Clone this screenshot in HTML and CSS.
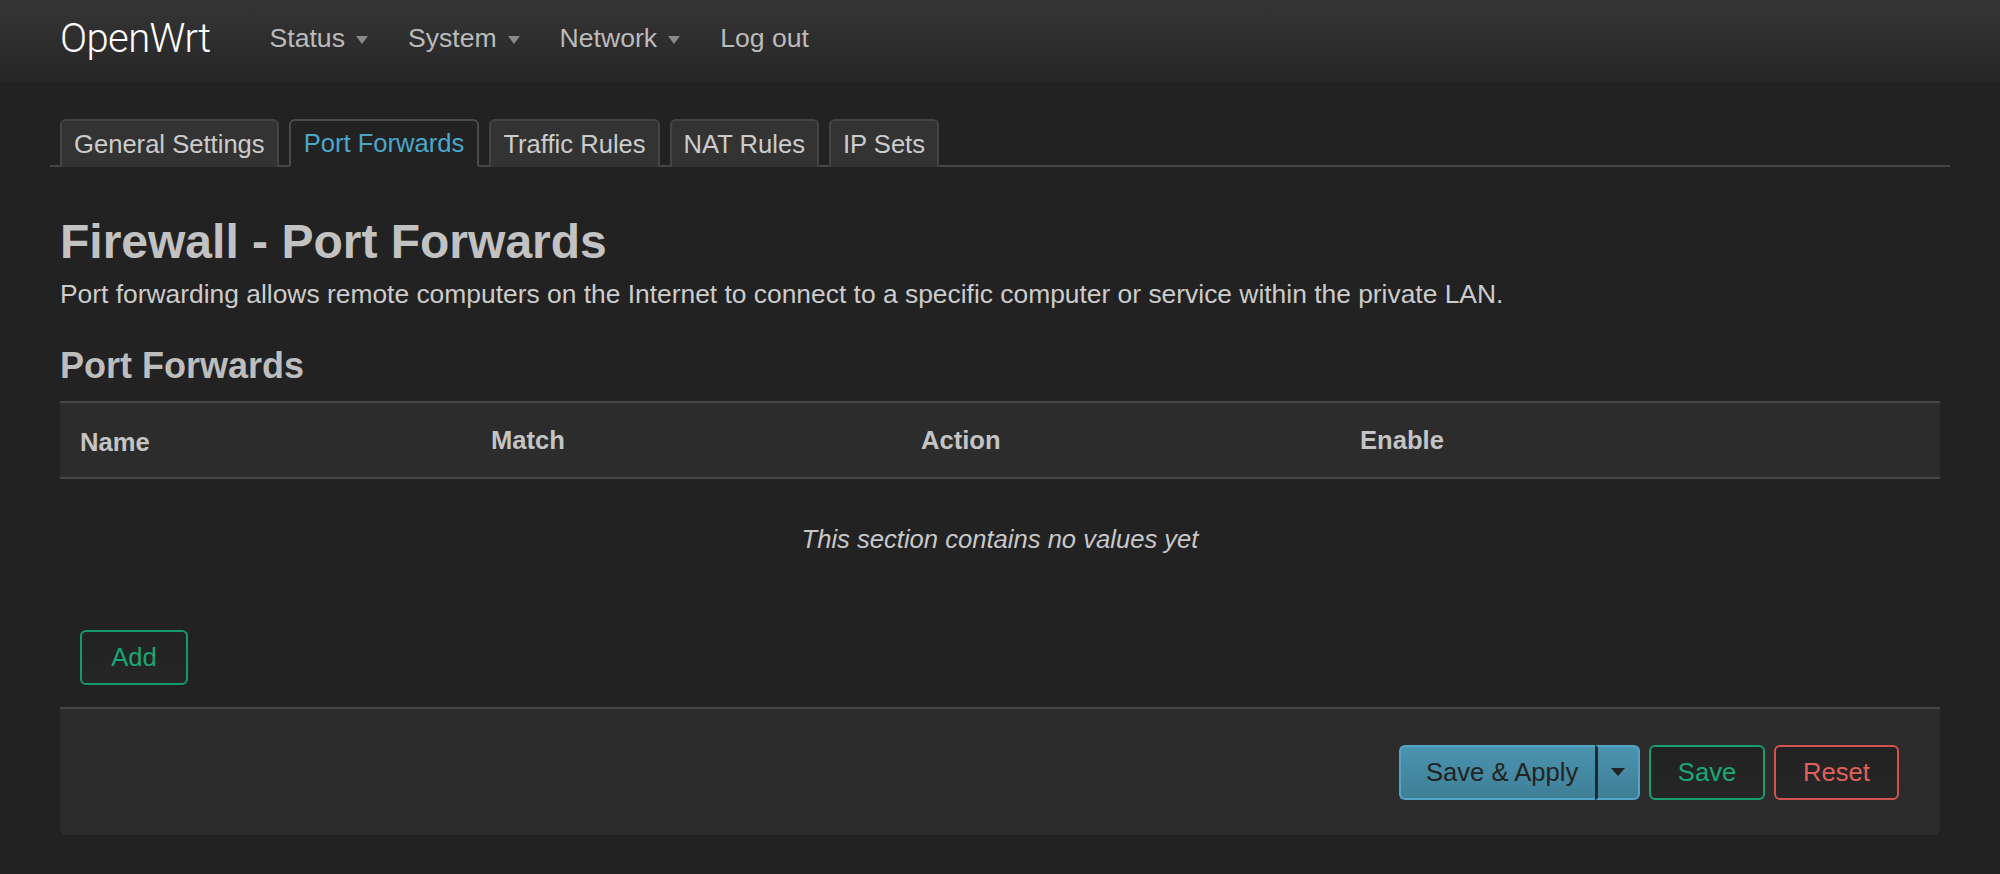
FILE: index.html
```html
<!DOCTYPE html>
<html lang="en">
<head>
<meta charset="utf-8">
<title>OpenWrt - Firewall - Port Forwards</title>
<link rel="stylesheet" href="styles.css">
</head>
<body>
<header class="topbar">
  <a class="brand" href="#">OpenWrt</a>
  <nav class="menu">
    <a class="menu-item" href="#">Status<span class="caret"></span></a>
    <a class="menu-item" href="#">System<span class="caret"></span></a>
    <a class="menu-item" href="#">Network<span class="caret"></span></a>
    <a class="menu-item" href="#">Log out</a>
  </nav>
</header>
<main class="container">
  <ul class="tabs">
    <li class="tab">General Settings</li>
    <li class="tab active">Port Forwards</li>
    <li class="tab">Traffic Rules</li>
    <li class="tab">NAT Rules</li>
    <li class="tab">IP Sets</li>
  </ul>
  <h2 class="page-title">Firewall - Port Forwards</h2>
  <p class="page-desc">Port forwarding allows remote computers on the Internet to connect to a specific computer or service within the private LAN.</p>
  <section class="cbi-section">
    <h3 class="section-title">Port Forwards</h3>
    <div class="table">
      <div class="table-head">
        <div class="th th-name">Name</div>
        <div class="th th-match">Match</div>
        <div class="th th-action">Action</div>
        <div class="th th-enable">Enable</div>
      </div>
      <div class="placeholder"><em>This section contains no values yet</em></div>
    </div>
    <div class="section-create">
      <button class="btn btn-add" type="button">Add</button>
    </div>
  </section>
  <div class="page-actions">
    <div class="btn-group">
      <button class="btn btn-apply" type="button">Save &amp; Apply</button>
      <button class="btn btn-apply-toggle" type="button"><span class="caret-dark"></span></button>
    </div>
    <button class="btn btn-save" type="button">Save</button>
    <button class="btn btn-reset" type="button">Reset</button>
  </div>
</main>
</body>
</html>
```
FILE: styles.css
```css
* { box-sizing: border-box; }
html, body { margin: 0; padding: 0; }
body {
  background: #222;
  color: #ccc;
  font-family: "Liberation Sans", Arial, sans-serif;
  font-size: 25.6px;
  line-height: 1.5;
}
a { text-decoration: none; }

.topbar {
  height: 83px;
  display: flex;
  align-items: center;
  padding: 0 0 6px 60px;
  background: linear-gradient(#353535, #262626);
}
.brand {
  font-family: "Roboto", "Liberation Sans", sans-serif;
  font-weight: 300;
  font-size: 40px;
  color: #fff;
  margin-right: 39px;
  letter-spacing: -0.6px;
}
.menu { display: flex; }
.menu-item {
  display: flex;
  align-items: center;
  color: #bbb;
  font-size: 26.6px;
  padding: 0 20px;
}
.caret {
  width: 0;
  height: 0;
  margin-left: 11px;
  margin-top: 3px;
  border-left: 6px solid transparent;
  border-right: 6px solid transparent;
  border-top: 8px solid #8a8a8a;
}

.container { padding: 0 60px; }

.tabs {
  list-style: none;
  display: flex;
  gap: 10px;
  margin: 36px -10px 0;
  padding: 0 0 0 10px;
  border-bottom: 2px solid #464646;
}
.tab {
  height: 48px;
  margin-bottom: -2px;
  padding: 0 12px;
  display: flex;
  align-items: center;
  background: #333;
  color: #ccc;
  border: 2px solid #444;
  border-bottom: none;
  border-radius: 6px 6px 0 0;
}
.tab.active {
  padding: 0 13px;
  background: #222;
  color: #4ba7cb;
  border-color: #4a4a4a;
  border-bottom: 2px solid #222;
}

.page-title {
  margin: 46px 0 0;
  font-size: 48px;
  line-height: 1.2;
  font-weight: bold;
  color: #c2c2c2;
}
.page-desc {
  margin: 4px 0 0;
  font-size: 26.4px;
  line-height: 1.5;
  color: #ccc;
}
.section-title {
  margin: 30px 0 0;
  font-size: 36px;
  line-height: 1.2;
  font-weight: bold;
  color: #bdbdbd;
}

.table { margin-top: 14px; }
.table-head {
  display: grid;
  grid-template-columns: 411px 430px 439px 1fr;
  height: 78px;
  align-items: center;
  background: #2c2c2c;
  border-top: 2px solid #464646;
  border-bottom: 2px solid #464646;
}
.th {
  padding: 0 20px;
  font-weight: bold;
  color: #c4c4c4;
}
.th-name { padding-top: 4px; }
.placeholder {
  height: 119px;
  display: flex;
  align-items: center;
  justify-content: center;
  color: #c8c8c8;
}

.section-create { padding: 32px 20px 22px; }

.btn {
  font-family: "Liberation Sans", Arial, sans-serif;
  font-size: 25.6px;
  height: 55px;
  border-radius: 6px;
  border: 2px solid #444;
  background: linear-gradient(#222, #262626);
  cursor: pointer;
}
.btn-add {
  width: 108px;
  color: #18a873;
  border-color: #139c69;
}

.page-actions {
  display: flex;
  justify-content: flex-end;
  align-items: center;
  gap: 9px;
  height: 128px;
  padding: 0 41px 0 0;
  background: #2c2c2c;
  border-top: 2px solid #464646;
  border-radius: 0 0 6px 6px;
}
.btn-group { display: flex; }
.btn-apply {
  width: 196px;
  color: #222;
  background: linear-gradient(#4b93ae, #3f7f97);
  border-color: #53a4c8;
  border-right: none;
  border-radius: 6px 0 0 6px;
  padding: 0 0 0 25px;
  text-align: left;
}
.btn-apply-toggle {
  width: 45px;
  background: linear-gradient(#4b93ae, #3f7f97);
  border-color: #53a4c8;
  border-left: 3px solid #1e2a30;
  border-radius: 0 6px 6px 0;
  display: flex;
  align-items: center;
  justify-content: center;
}
.caret-dark {
  width: 0;
  height: 0;
  border-left: 7px solid transparent;
  border-right: 7px solid transparent;
  border-top: 8px solid #222;
}
.btn-save {
  width: 116px;
  color: #1aa874;
  border-color: #16a06c;
}
.btn-reset {
  width: 125px;
  color: #e2605b;
  border-color: #d1524e;
}
```
